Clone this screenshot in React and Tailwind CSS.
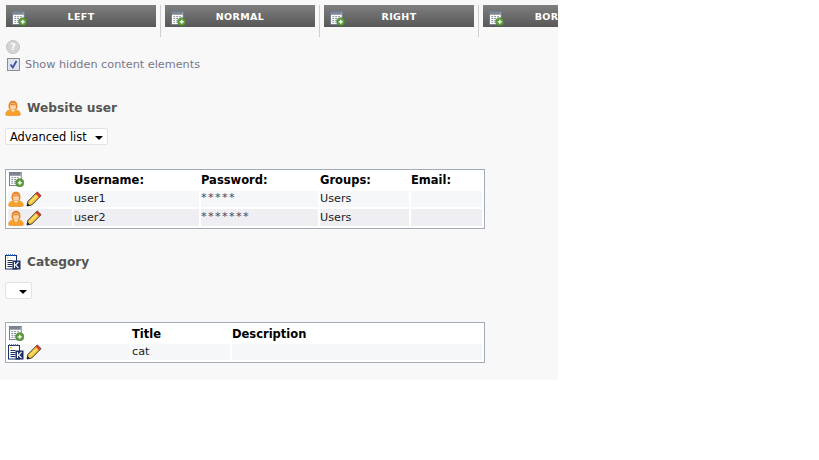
const NewIcon = () => (
  <svg width="15" height="15" viewBox="0 0 16 16" className="block">
    <rect x="0.5" y="0.5" width="12.5" height="14" fill="#fff" stroke="#6b7a8c" />
    <rect x="1" y="1" width="11.500" height="3" fill="#7d8794" />
    <path d="M2.500 6h2M5.500 6h2M8.500 6h2M2.500 8h2M5.500 8h2M2.500 10h2M5.500 10h2M2.500 12h2M5.500 12h2" stroke="#7d8794" />
    <circle cx="11.500" cy="11.500" r="4.300" fill="#5c9a3c" stroke="#3f7a2a" strokeWidth="0.6" />
    <path d="M9.300 11.500h4.400M11.500 9.300v4.400" stroke="#fff" strokeWidth="1.400" />
  </svg>
);

const UserIcon = () => (
  <svg width="16" height="16" viewBox="0 0 16 16" className="block shrink-0">
    <path d="M0.700 14c0-2.500 2-3.800 4.800-4.300h5c2.800.5 4.800 1.800 4.800 4.300 0 1-.8 1.500-1.800 1.500H2.500c-1 0-1.800-.5-1.800-1.500z" fill="#f7a02c" stroke="#e5861a" strokeWidth="0.6" />
    <path d="M3.500 6.500C3.500 2.500 5.500.8 8 .8s4.500 1.700 4.500 5.700c0 1.500-.7 2.500-1.500 3H5c-.8-.5-1.500-1.500-1.500-3z" fill="#e8842a" />
    <ellipse cx="8" cy="6.400" rx="3" ry="3.300" fill="#fcd3a4" />
    <path d="M5 5.500c.5-2.200 5.500-2.200 6 0-2-.8-4-.8-6 0z" fill="#e8842a" />
    <path d="M5.800 10h4.400L8 12.200z" fill="#fde6c8" />
  </svg>
);

const PencilIcon = () => (
  <svg width="16" height="16" viewBox="0 0 16 16" className="block shrink-0">
    <path d="M1 15l1-4.700L11.300 1l3.700 3.700-9.300 9.300z" fill="#f9cc3f" stroke="#1f1f1f" strokeWidth="0.9" strokeLinejoin="round" />
    <path d="M11.300 1L15 4.700l-1.800 1.800-3.700-3.700z" fill="#d8392b" />
    <path d="M1 15l.6-3 2.400 2.400z" fill="#1f1f1f" />
    <path d="M4 11.500l7-7" stroke="#fdf0a8" strokeWidth="1" />
  </svg>
);

const CategoryIcon = () => (
  <svg width="16" height="16" viewBox="0 0 16 16" className="block shrink-0">
    <rect x="0.500" y="1.500" width="11" height="13.500" fill="#fff" stroke="#17336b" />
    <path d="M1 1h10" stroke="#1c5fc0" strokeWidth="1.500" strokeDasharray="1 1" />
    <rect x="2" y="3" width="1.500" height="1.500" fill="#e8c420" />
    <path d="M2.500 6.500h5M2.500 8.500h5M2.500 10.500h5M2.500 12.500h5" stroke="#1c2f63" />
    <rect x="7.500" y="6.500" width="8" height="9" fill="#1c2f63" />
    <path d="M9.500 8v6M13.500 8l-3 3 3 3" stroke="#fff" fill="none" strokeWidth="1.100" />
  </svg>
);

const ColumnButton = ({ label }) => (
  <div className="flex shrink-0 items-start">
    <div className="relative flex h-[22px] w-[150px] items-center justify-center bg-gradient-to-b from-[#7f7f7f] to-[#585858] pt-[2px] text-[9.5px] font-bold tracking-[0.4px] text-white">
      <span className="absolute left-[6px] top-[6px]"><NewIcon /></span>
      {label}
    </div>
    <div className="mx-1 h-8 w-px bg-[#cfcfcf]" />
  </div>
);

const Select = ({ label, className }) => (
  <div className={`flex h-[17px] items-center justify-between rounded-[2px] border border-[#dfe3ea] bg-white pl-1 pr-[4px] pt-[2px] text-[11.4px] leading-none text-black ${className}`}>
    <span>{label}</span>
    <span className="mt-[1px] h-0 w-0 border-x-[4px] border-t-[4px] border-x-transparent border-t-black" />
  </div>
);

const SectionTitle = ({ icon, title }) => (
  <div className="flex h-4 items-center gap-[6px] text-[12.2px] font-bold leading-none text-[#555555]">
    {icon}
    <span>{title}</span>
  </div>
);

const UserRow = ({ name, password, tone, height }) => (
  <>
    <div className={`flex items-center gap-[2px] ${tone} ${height}`}>
      <UserIcon />
      <PencilIcon />
    </div>
    <div className={`flex items-center ${tone} ${height}`}>{name}</div>
    <div className={`leading-[13px] tracking-[1.4px] text-[#444455] ${tone} ${height}`}>{password}</div>
    <div className={`flex items-center ${tone} ${height}`}>Users</div>
    <div className={`${tone} ${height}`} />
  </>
);

const HeaderCell = ({ label, height }) => (
  <div className={`flex items-center pt-[3px] text-[11.5px] font-bold text-black ${height}`}>{label}</div>
);

export default function App() {
  return (
    <div className="h-[460px] w-[819px] overflow-hidden bg-white font-['DejaVu_Sans','Liberation_Sans',sans-serif] text-[11.2px] text-[#222222]">
      <div className="h-[380px] w-[558px] overflow-hidden bg-[#f8f8f8]">
        <div className="flex pl-[6px] pt-[5px]">
          <ColumnButton label="LEFT" />
          <ColumnButton label="NORMAL" />
          <ColumnButton label="RIGHT" />
          <ColumnButton label="BORDER" />
        </div>

        <div className="ml-[6px] mt-[3px] flex h-[14px] w-[14px] items-center justify-center rounded-full border border-[#c4c4c4] bg-[#d4d4d4] text-[9px] font-bold leading-none text-white">?</div>

        <label className="ml-[7px] mt-[4px] flex h-[13px] items-center gap-[5px] text-[11.25px] text-[#77778a]">
          <span className="flex h-[13px] w-[13px] items-center justify-center border border-[#8d8d8d] bg-[#dfe3f0]">
            <svg width="9" height="9" viewBox="0 0 9 9"><path d="M1.500 4.500l2.300 3L7.500 1" fill="none" stroke="#3d52a0" strokeWidth="1.800" /></svg>
          </span>
          <span className="mt-[2px]">Show hidden content elements</span>
        </label>

        <div className="ml-[5px] mt-[29px]">
          <SectionTitle icon={<UserIcon />} title="Website user" />
        </div>
        <Select label="Advanced list" className="ml-[5px] mt-[12px] w-[103px]" />

        <div className="ml-[5px] mt-[24px] w-[480px] border border-[#a4abb8] bg-white pb-[2px] pl-[2px]">
          <div className="grid grid-cols-[64px_125px_117px_89px_71px] gap-[2px]">
            <div className="flex h-[19px] items-center pl-px"><NewIcon /></div>
            <HeaderCell label="Username:" height="h-[19px]" />
            <HeaderCell label="Password:" height="h-[19px]" />
            <HeaderCell label="Groups:" height="h-[19px]" />
            <HeaderCell label="Email:" height="h-[19px]" />
            <UserRow name="user1" password="*****" tone="bg-[#f6f7f9]" height="h-[16px]" />
            <UserRow name="user2" password="*******" tone="bg-[#efeff3]" height="h-[17px] pt-px" />
          </div>
        </div>

        <div className="ml-[5px] mt-[25px]">
          <SectionTitle icon={<CategoryIcon />} title="Category" />
        </div>
        <Select label="" className="ml-[5px] mt-[12px] w-[27px]" />

        <div className="ml-[5px] mt-[23px] w-[480px] border border-[#a4abb8] bg-white pb-[2px] pl-[2px]">
          <div className="grid grid-cols-[122px_98px_250px] gap-x-[2px] gap-y-[1px]">
            <div className="flex h-[20px] items-center pl-px"><NewIcon /></div>
            <HeaderCell label="Title" height="h-[20px]" />
            <HeaderCell label="Description" height="h-[20px]" />
            <div className="flex h-[16px] items-center gap-[2px] bg-[#f6f7f9]">
              <CategoryIcon />
              <PencilIcon />
            </div>
            <div className="flex h-[16px] items-center bg-[#f6f7f9]">cat</div>
            <div className="h-[16px] bg-[#f6f7f9]" />
          </div>
        </div>
      </div>
    </div>
  );
}
